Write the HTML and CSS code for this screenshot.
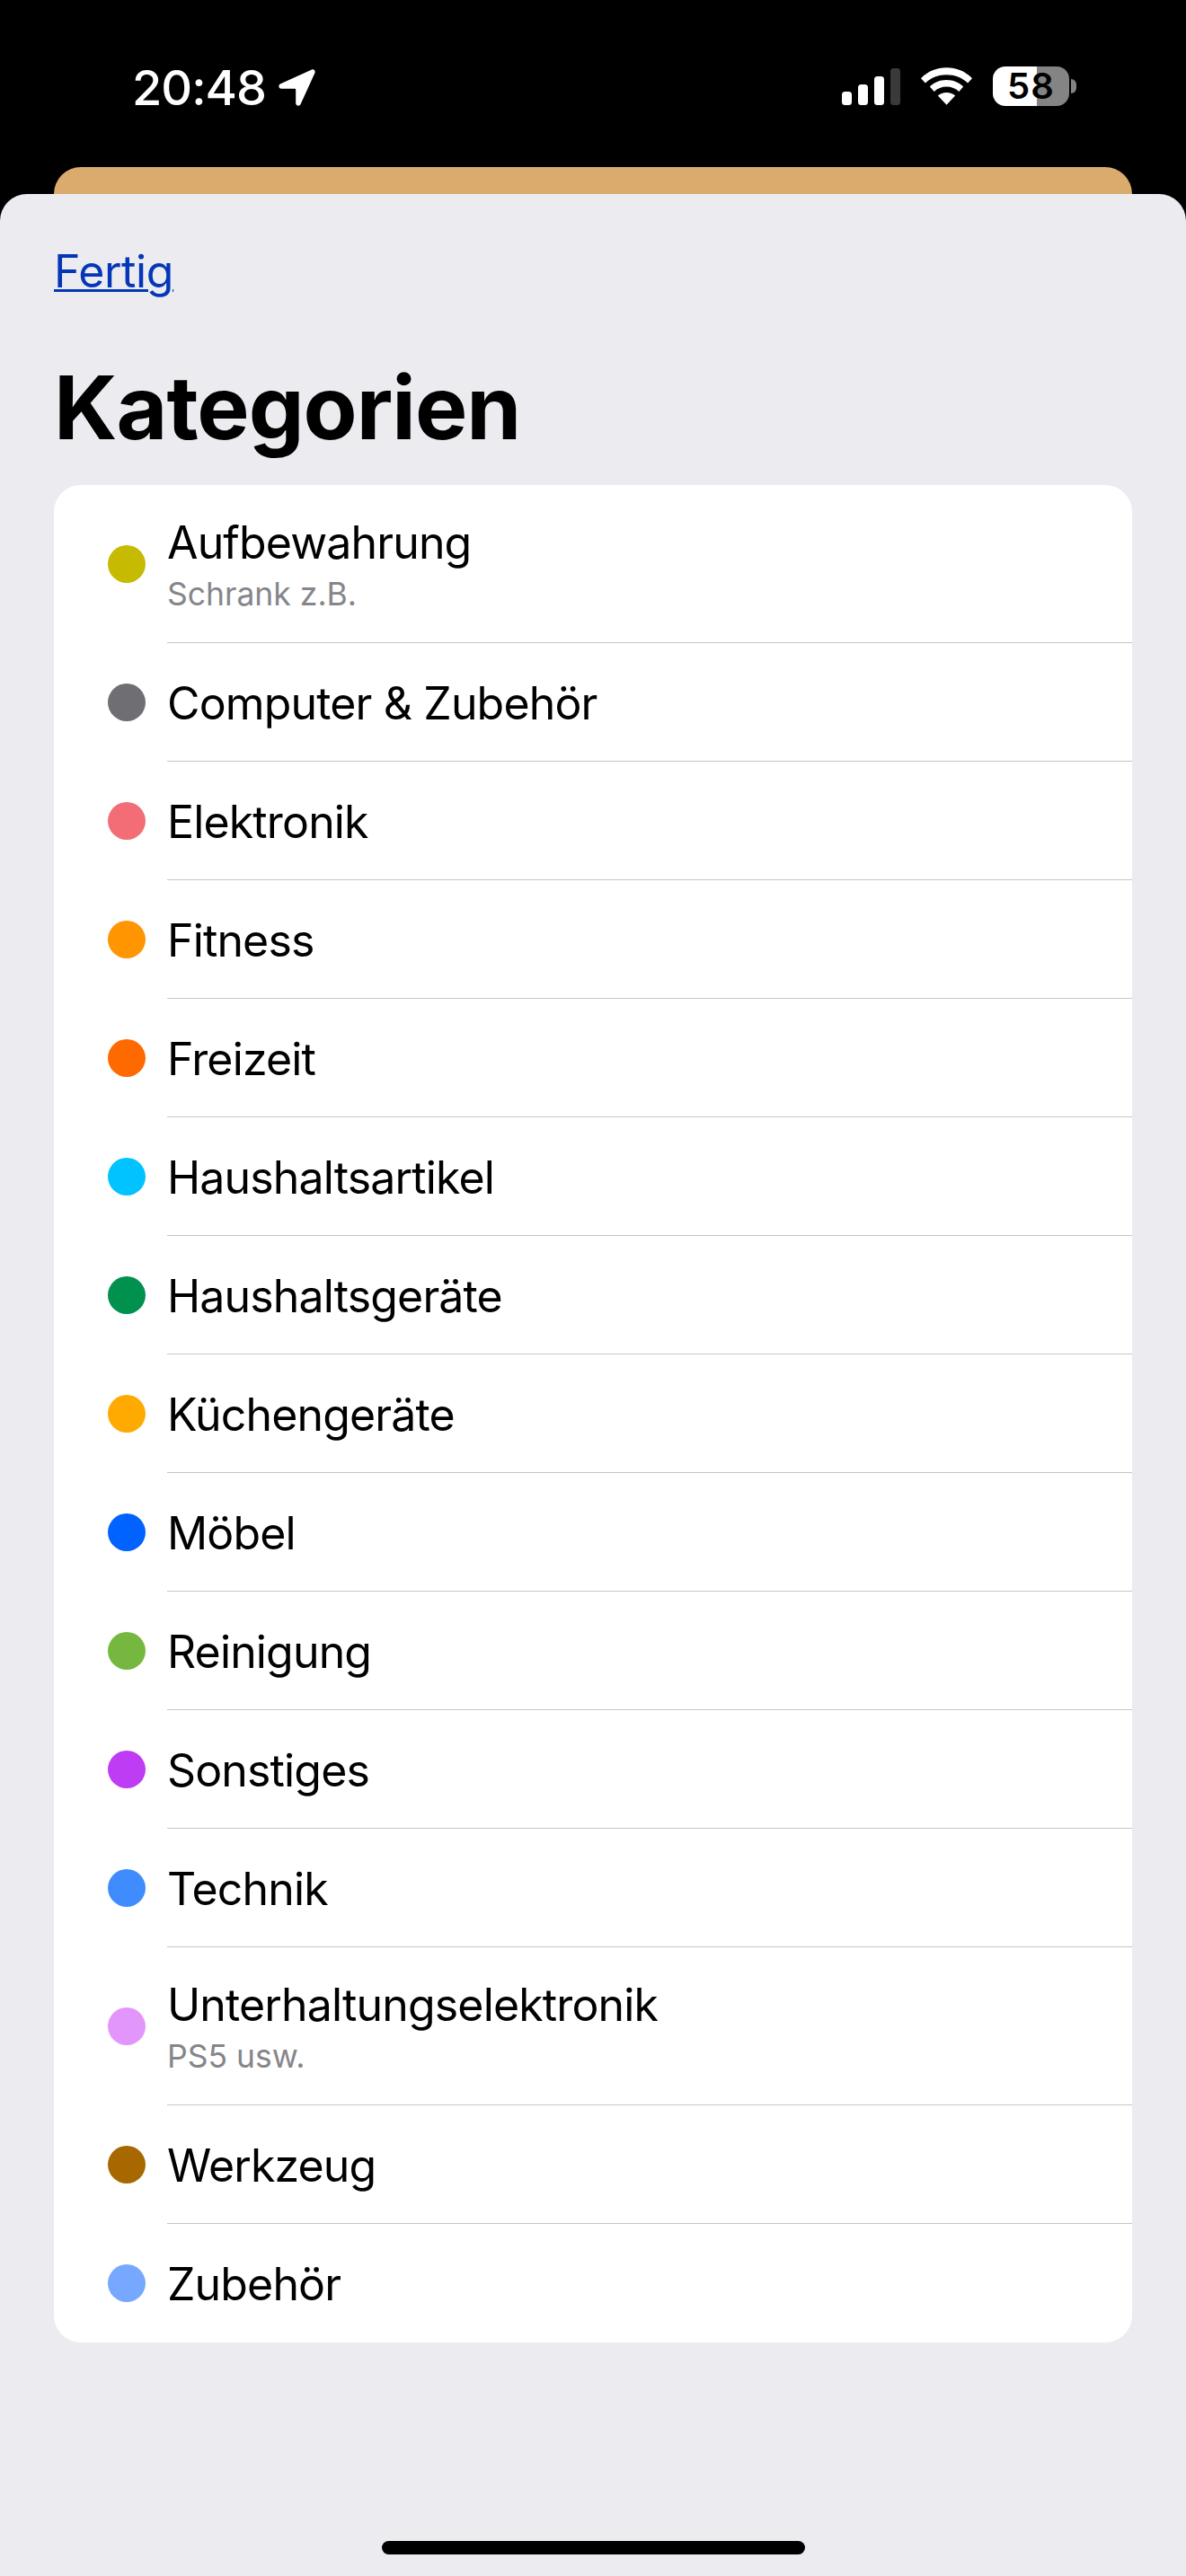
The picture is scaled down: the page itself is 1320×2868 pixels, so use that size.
FILE: index.html
```html
<!DOCTYPE html>
<html lang="de">
<head>
    <meta charset="UTF-8">
    <meta name="viewport" content="width=device-width, initial-scale=1.0">
    <title>Kategorien</title>
    <link rel="stylesheet" href="styles.css">
</head>
<body>
    <!-- Status bar -->
    <div class="status-bar">
        <div class="status-left">
            <span class="clock">20:48</span>
            <svg class="location-icon" width="41" height="41" viewBox="0 0 41 41"><path d="M36.500.7 2.300 16.200C-.8 17.600 0 21.700 3.200 21.700H18c.7 0 1.200.5 1.200 1.200v14.800c0 3.200 4.200 4.100 5.500 1.100L40.300 4.500C41.500 1.800 39.200-.5 36.500.7Z" fill="#fff"/></svg>
        </div>
        <div class="status-right">
            <svg width="65" height="41" viewBox="0 0 65 41">
                <rect x="0" y="26" width="11" height="15" rx="3.500" fill="#fff"/>
                <rect x="18" y="18" width="11" height="23" rx="3.500" fill="#fff"/>
                <rect x="36" y="9" width="11" height="32" rx="3.500" fill="#fff"/>
                <rect x="54" y="0" width="11" height="41" rx="3.500" fill="#3a3a3a"/>
            </svg>
            <svg width="57" height="42" viewBox="0 0 58 42">
                <path d="M29 0C18 0 8 4 0 12l5 5.500C11.500 11 20 8 29 8s17.500 3 24 9.500l5-5.500C50 4 40 0 29 0Z" fill="#fff"/>
                <path d="M29 14c-7.500 0-14 2.800-19 7.500l5 5.500c3.600-3.500 8.700-5.500 14-5.500s10.400 2 14 5.500l5-5.500C43 16.800 36.500 14 29 14Z" fill="#fff"/>
                <path d="M29 28c-3.800 0-7.200 1.400-9.800 3.700L29 42l9.800-10.300C36.200 29.400 32.800 28 29 28Z" fill="#fff"/>
            </svg>
            <div class="battery">
                <div class="battery-body"><span class="battery-level">58</span></div>
                <div class="battery-cap"></div>
            </div>
        </div>
    </div>

    <div class="back-sheet"></div>

    <div class="sheet">
        <a class="done-link" href="#">Fertig</a>
        <h1 class="title">Kategorien</h1>

        <ul class="category-list">
            <li class="category-row tall">
                <span class="dot dot-storage"></span>
                <div class="row-text">
                    <span class="row-name">Aufbewahrung</span>
                    <span class="row-note">Schrank z.B.</span>
                </div>
            </li>
            <li class="category-row"><span class="dot dot-computer"></span><div class="row-text"><span class="row-name">Computer &amp; Zubehör</span></div></li>
            <li class="category-row"><span class="dot dot-electronics"></span><div class="row-text"><span class="row-name">Elektronik</span></div></li>
            <li class="category-row"><span class="dot dot-fitness"></span><div class="row-text"><span class="row-name">Fitness</span></div></li>
            <li class="category-row"><span class="dot dot-leisure"></span><div class="row-text"><span class="row-name">Freizeit</span></div></li>
            <li class="category-row"><span class="dot dot-household"></span><div class="row-text"><span class="row-name">Haushaltsartikel</span></div></li>
            <li class="category-row"><span class="dot dot-appliances"></span><div class="row-text"><span class="row-name">Haushaltsgeräte</span></div></li>
            <li class="category-row"><span class="dot dot-kitchen"></span><div class="row-text"><span class="row-name">Küchengeräte</span></div></li>
            <li class="category-row"><span class="dot dot-furniture"></span><div class="row-text"><span class="row-name">Möbel</span></div></li>
            <li class="category-row"><span class="dot dot-cleaning"></span><div class="row-text"><span class="row-name">Reinigung</span></div></li>
            <li class="category-row"><span class="dot dot-other"></span><div class="row-text"><span class="row-name">Sonstiges</span></div></li>
            <li class="category-row"><span class="dot dot-tech"></span><div class="row-text"><span class="row-name">Technik</span></div></li>
            <li class="category-row tall">
                <span class="dot dot-entertainment"></span>
                <div class="row-text">
                    <span class="row-name">Unterhaltungselektronik</span>
                    <span class="row-note">PS5 usw.</span>
                </div>
            </li>
            <li class="category-row"><span class="dot dot-tools"></span><div class="row-text"><span class="row-name">Werkzeug</span></div></li>
            <li class="category-row last"><span class="dot dot-accessories"></span><div class="row-text"><span class="row-name">Zubehör</span></div></li>
        </ul>

        <div class="home-indicator"></div>
    </div>
</body>
</html>
```

FILE: styles.css
```css
* {
    box-sizing: border-box;
}

body {
    margin: 0;
    height: 2868px;
    background-color: #000;
    font-family: 'Inter', 'Liberation Sans', sans-serif;
    display: flex;
    flex-direction: column;
    overflow: hidden;
}

/* Status bar */
.status-bar {
    height: 186px;
    padding: 0 122px 0 147px;
    display: flex;
    justify-content: space-between;
    align-items: flex-start;
    color: #fff;
}

.status-left {
    display: flex;
    align-items: center;
    gap: 14px;
    padding-top: 77px;
}

.clock {
    font-size: 54px;
    line-height: 41px;
    font-weight: 500;
    letter-spacing: -1px;
}

.status-right {
    display: flex;
    align-items: center;
    gap: 23px;
    padding-top: 74px;
}

.battery {
    display: flex;
    align-items: center;
    gap: 2px;
}

.battery-body {
    width: 85px;
    height: 44px;
    border-radius: 14px;
    background: linear-gradient(to right, #fff 49px, #848484 49px);
    display: flex;
    align-items: center;
    justify-content: center;
}

.battery-level {
    font-size: 40px;
    font-weight: 600;
    letter-spacing: 1px;
    color: #000;
    line-height: 44px;
}

.battery-cap {
    width: 6px;
    height: 16px;
    border-radius: 0 8px 8px 0;
    background-color: #848484;
}

.back-sheet {
    height: 30px;
    margin: 0 60px;
    background-color: #dbab6e;
    border-radius: 30px 30px 0 0;
}

.sheet {
    flex: 1;
    background-color: #ecebf0;
    border-radius: 30px 30px 0 0;
    padding: 0 60px;
    position: relative;
}

.done-link {
    display: block;
    margin-top: 56px;
    font-size: 50px;
    line-height: 60px;
    letter-spacing: -0.4px;
    color: #0437b8;
    text-decoration: underline;
    text-decoration-thickness: 3px;
    width: max-content;
}

.title {
    margin: 62px 0 0;
    font-size: 98px;
    line-height: 120px;
    font-weight: 700;
    color: #000;
    letter-spacing: -1px;
}

.category-list {
    list-style: none;
    margin: 26px 0 0;
    padding: 0;
    background-color: #fff;
    border-radius: 30px;
    overflow: hidden;
}

.category-row {
    height: 132px;
    padding-left: 60px;
    display: flex;
    align-items: center;
    gap: 24px;
}

.category-row.tall {
    height: 176px;
}

.dot {
    width: 42px;
    height: 42px;
    border-radius: 50%;
    flex-shrink: 0;
}

.row-text {
    flex: 1;
    height: 100%;
    padding-top: 2px;
    display: flex;
    flex-direction: column;
    justify-content: center;
    border-bottom: 1px solid #c6c6c8;
}

.last .row-text {
    border-bottom: none;
}

.row-name {
    font-size: 50px;
    line-height: 60px;
    letter-spacing: -0.85px;
    color: #000;
}

.row-note {
    font-size: 35.500px;
    line-height: 44px;
    margin-top: 6px;
    color: #86868a;
}

.dot-storage { background-color: #c6bb00; }
.dot-computer { background-color: #6e6e73; }
.dot-electronics { background-color: #f26d75; }
.dot-fitness { background-color: #ff9500; }
.dot-leisure { background-color: #ff6a00; }
.dot-household { background-color: #00c3ff; }
.dot-appliances { background-color: #00914f; }
.dot-kitchen { background-color: #ffaa00; }
.dot-furniture { background-color: #0062ff; }
.dot-cleaning { background-color: #76b83f; }
.dot-other { background-color: #bf3cf5; }
.dot-tech { background-color: #3f8cff; }
.dot-entertainment { background-color: #e296fb; }
.dot-tools { background-color: #a86800; }
.dot-accessories { background-color: #76a8ff; }

.home-indicator {
    position: absolute;
    left: 425px;
    bottom: 24px;
    width: 471px;
    height: 15px;
    border-radius: 8px;
    background-color: #000;
}
```
